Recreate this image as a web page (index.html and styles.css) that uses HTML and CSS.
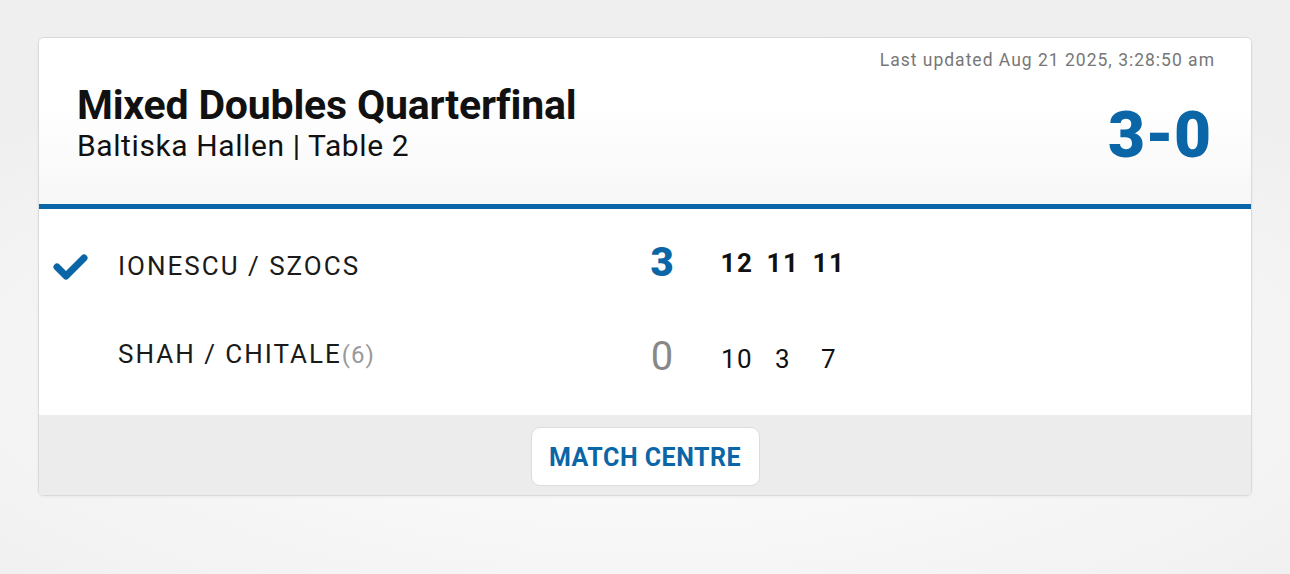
FILE: index.html
```html
<!DOCTYPE html>
<html lang="en">
<head>
  <meta charset="UTF-8">
  <meta name="viewport" content="width=device-width, initial-scale=1">
  <title>Mixed Doubles Quarterfinal</title>
  <link rel="stylesheet" href="styles.css">
</head>
<body>

  <div class="match-card">
    <div class="match-head">
      <div class="match-info">
        <h1>Mixed Doubles Quarterfinal</h1>
        <p class="venue">Baltiska Hallen | Table 2</p>
      </div>
      <div class="match-status">
        <div class="updated">Last updated Aug 21 2025, 3:28:50 am</div>
        <div class="final-score">3-0</div>
      </div>
    </div>

    <div class="match-rows">
      <div class="team-row winner">
        <div class="mark">
          <svg width="36" height="28" viewBox="0 0 36 28">
            <path d="M5 15 L14 24 L32 6" fill="none" stroke="#0a66a6" stroke-width="7" stroke-linecap="round" stroke-linejoin="round"/>
          </svg>
        </div>
        <div class="team">IONESCU / SZOCS</div>
        <div class="games-won">3</div>
        <div class="games">
          <span>12</span><span>11</span><span>11</span>
        </div>
      </div>
      <div class="team-row">
        <div class="mark"></div>
        <div class="team">SHAH / CHITALE<span class="seed">(6)</span></div>
        <div class="games-won">0</div>
        <div class="games">
          <span>10</span><span>3</span><span>7</span>
        </div>
      </div>
    </div>

    <div class="match-foot">
      <button class="centre-btn">MATCH CENTRE</button>
    </div>
  </div>

</body>
</html>
```

FILE: styles.css
```css
body {
  margin: 0;
  padding: 37px 38px 0;
  height: 574px;
  box-sizing: border-box;
  font-family: Roboto, "Liberation Sans", sans-serif;
  color: #111;
  background: radial-gradient(ellipse 70% 60% at 50% 65%, #fcfcfc 0%, #f7f7f7 50%, #efefef 100%);
}
.match-card {
  background: #fff;
  border: 1px solid #dadada;
  border-radius: 6px;
  overflow: hidden;
  box-shadow: 0 1px 3px rgba(0, 0, 0, 0.05);
}
.match-head {
  display: flex;
  justify-content: space-between;
  height: 166px;
  padding: 0 40px 0 38px;
  background: linear-gradient(#fff 40%, #f8f7f7);
  border-bottom: 5px solid #0a66a6;
}
.match-info {
  align-self: center;
  padding-top: 6px;
}
h1 {
  margin: 0;
  font-size: 41px;
  font-weight: 700;
  line-height: 44px;
  letter-spacing: -0.2px;
}
.venue {
  margin: 0;
  font-size: 30px;
  line-height: 38px;
  letter-spacing: 0.6px;
}
.match-status {
  display: flex;
  flex-direction: column;
  align-items: flex-end;
  padding-top: 12px;
}
.updated {
  font-size: 17.5px;
  color: #777;
  letter-spacing: 1px;
  margin-right: -4px;
}
.final-score {
  margin-top: 34px;
  font-size: 64px;
  font-weight: 900;
  line-height: 64px;
  color: #0a66a6;
}
.match-rows {
  padding: 13px 0 17px;
}
.team-row {
  display: grid;
  grid-template-columns: 79px 514px 60px 1fr;
  align-items: center;
  height: 88px;
}
.mark {
  padding-left: 13px;
  padding-top: 4px;
}
.team {
  font-size: 26px;
  letter-spacing: 2px;
  color: #1a1a1a;
}
.seed {
  color: #999;
  font-size: 24px;
  letter-spacing: 1px;
}
.games-won {
  text-align: center;
  font-size: 40px;
  color: #888;
  margin-top: 4px;
}
.winner .games-won {
  font-weight: 900;
  color: #0a66a6;
  margin-top: -8px;
}
.games {
  display: flex;
  padding-left: 22px;
  font-size: 26px;
  letter-spacing: 1.5px;
  margin-top: 10px;
}
.winner .games {
  font-weight: 700;
  margin-top: -6px;
}
.games span {
  width: 46px;
  text-align: center;
}
.match-foot {
  display: flex;
  justify-content: center;
  align-items: center;
  height: 80px;
  background: #ececec;
}
.centre-btn {
  box-sizing: border-box;
  width: 229px;
  height: 59px;
  margin-top: 2px;
  padding-top: 4px;
  background: #fff;
  border: 1px solid #dcdcdc;
  border-radius: 9px;
  font-family: Roboto, sans-serif;
  font-size: 25px;
  font-weight: 700;
  color: #0a66a6;
  letter-spacing: 0.5px;
}
```
